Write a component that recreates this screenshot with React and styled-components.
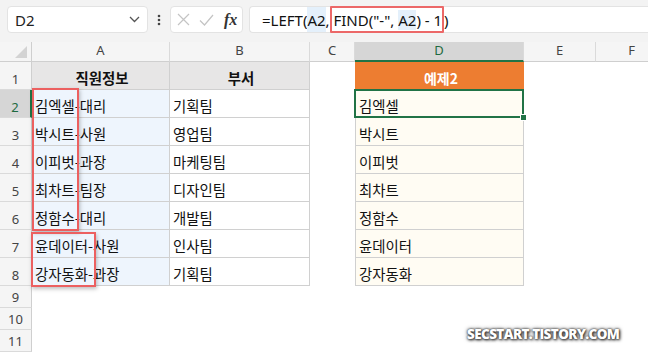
import React from 'react';
import styled, { createGlobalStyle, css } from 'styled-components';

const GlobalStyle = createGlobalStyle`
  body {
    margin: 0;
    background: #ffffff;
  }
`;

const Page = styled.div`
  position: relative;
  width: 648px;
  height: 353px;
  overflow: hidden;
  background: #ffffff;
  font-family: "Noto Sans", "Noto Sans CJK KR", sans-serif;
`;

const Toolbar = styled.div`
  display: flex;
  align-items: flex-start;
  height: 42px;
  box-sizing: border-box;
  padding: 6px 0 0 7px;
  background: #f3f3f3;
`;

const NameBox = styled.div`
  display: flex;
  align-items: center;
  justify-content: space-between;
  width: 141px;
  height: 27px;
  box-sizing: border-box;
  padding: 0 7px 0 7px;
  background: #ffffff;
  border: 1px solid #e3e3e3;
  border-radius: 4px;
  font-size: 15px;
  color: #222;
`;

const Dots = styled.div`
  display: flex;
  align-items: center;
  justify-content: center;
  width: 22px;
  height: 27px;
`;

const FxBox = styled.div`
  display: flex;
  align-items: center;
  gap: 9px;
  width: 73px;
  height: 27px;
  box-sizing: border-box;
  padding: 0 0 0 6px;
  margin-right: 6px;
  background: #ffffff;
  border: 1px solid #e3e3e3;
  border-radius: 4px;
`;

const Fx = styled.span`
  font-family: "Liberation Serif", serif;
  font-style: italic;
  font-weight: bold;
  font-size: 16px;
  color: #333;
  margin-left: 1px;
`;

const FormulaBox = styled.div`
  flex: 1;
  display: flex;
  align-items: stretch;
  height: 27px;
  box-sizing: border-box;
  padding-left: 12px;
  background: #ffffff;
  border: 1px solid #e3e3e3;
  border-right: none;
  border-radius: 4px 0 0 4px;
  font-size: 15px;
  color: #111;
  white-space: pre;
`;

const Token = styled.span`
  display: flex;
  align-items: center;
  ${(p) => p.$ref && css`background: #e4f0fb;`}
`;

const Marked = styled.span`
  display: flex;
  align-items: center;
  margin: -1px 0 -1px -4px;
  padding: 0 0 0 2px;
  border: 2px solid #ec6868;
  border-radius: 1px;
`;

const Sheet = styled.div`
  position: relative;
  display: grid;
  grid-template-columns: 32px 138px 140px 45px 169px 72px 72px;
  grid-template-rows: 20px repeat(8, 28px) repeat(3, 22px);
  width: 668px;
`;

const Corner = styled.div`
  position: relative;
  background: #f5f5f5;
  border-right: 1px solid #cfcfcf;
  border-bottom: 1px solid #cfcfcf;
  box-sizing: border-box;

  &::after {
    content: '';
    position: absolute;
    right: 4px;
    bottom: 3px;
    border-left: 12px solid transparent;
    border-bottom: 12px solid #d3d3d3;
  }
`;

const ColHead = styled.div`
  display: flex;
  align-items: center;
  justify-content: center;
  padding-bottom: 3px;
  box-sizing: border-box;
  background: ${(p) => (p.$active ? '#d6d6d6' : '#f5f5f5')};
  border-right: 1px solid #dadada;
  border-bottom: ${(p) => (p.$active ? '2px solid #217346' : '1px solid #cfcfcf')};
  font-size: 13px;
  color: ${(p) => (p.$active ? '#1e6b41' : '#444')};
`;

const RowHead = styled.div`
  display: flex;
  align-items: flex-end;
  justify-content: center;
  padding-bottom: 2px;
  box-sizing: border-box;
  background: ${(p) => (p.$active ? '#d6d6d6' : '#f5f5f5')};
  border-right: ${(p) => (p.$active ? '2px solid #217346' : '1px solid #cfcfcf')};
  border-bottom: 1px solid #dadada;
  font-size: 13px;
  line-height: 16px;
  color: ${(p) => (p.$active ? '#1e6b41' : '#444')};
`;

const kinds = {
  title: css`
    background: #e7e6e6;
    justify-content: center;
    font-weight: bold;
    border-right: 1px solid #d0d0d0;
    border-bottom: 1px solid #d0d0d0;
  `,
  name: css`
    background: #eef5fd;
    border-right: 1px solid #d0d0d0;
    border-bottom: 1px solid #d0d0d0;
  `,
  dept: css`
    background: #ffffff;
    border-right: 1px solid #d0d0d0;
    border-bottom: 1px solid #d0d0d0;
  `,
  resultTitle: css`
    background: #ed7d31;
    color: #ffffff;
    justify-content: center;
    font-weight: bold;
    font-size: 14px;
  `,
  result: css`
    background: #fffcf3;
    border-left: 1px solid #d0d0d0;
    border-right: 1px solid #d0d0d0;
    border-bottom: 1px solid #d0d0d0;
  `,
  blank: css`
    background: #ffffff;
  `,
};

const Cell = styled.div`
  position: relative;
  display: flex;
  align-items: center;
  padding: 3px 0 0 3px;
  box-sizing: border-box;
  font-family: "Noto Sans CJK KR", "Noto Sans", sans-serif;
  font-size: 14.4px;
  color: #111;
  white-space: nowrap;
  ${(p) => kinds[p.$kind]}

  ${(p) =>
    p.$selected &&
    css`
      &::after {
        content: '';
        position: absolute;
        left: -2px;
        top: -1px;
        right: -1px;
        bottom: -1px;
        border: 2px solid #217346;
        z-index: 2;
      }
      &::before {
        content: '';
        position: absolute;
        right: -4px;
        bottom: -4px;
        width: 5px;
        height: 5px;
        background: #217346;
        border: 1px solid #ffffff;
        z-index: 3;
      }
    `}
`;

const Mark = styled.div`
  position: absolute;
  left: ${(p) => p.$left}px;
  top: ${(p) => p.$top}px;
  width: ${(p) => p.$width}px;
  height: ${(p) => p.$height}px;
  box-sizing: border-box;
  border: 2px solid #ec6060;
  box-shadow: 1px 2px 4px rgba(0, 0, 0, 0.25);
  pointer-events: none;
`;

const Watermark = styled.div`
  position: absolute;
  left: 467px;
  top: 325px;
  font-family: "Open Sans", sans-serif;
  font-weight: 800;
  font-size: 13.5px;
  letter-spacing: -0.6px;
  color: #ffffff;
  text-shadow: 0 0 2px #333, 1px 1px 3px #222, 0 0 4px rgba(0, 0, 0, 0.6);
`;

const letters = ['A', 'B', 'C', 'D', 'E', 'F'];

const data = [
  ['김엑셀-대리', '기획팀', '김엑셀'],
  ['박시트-사원', '영업팀', '박시트'],
  ['이피벗-과장', '마케팅팀', '이피벗'],
  ['최차트-팀장', '디자인팀', '최차트'],
  ['정함수-대리', '개발팀', '정함수'],
  ['윤데이터-사원', '인사팀', '윤데이터'],
  ['강자동화-과장', '기획팀', '강자동화'],
];

const Chevron = () => (
  <svg width="11" height="7" viewBox="0 0 11 7">
    <path d="M1 1l4.5 4.5L10 1" fill="none" stroke="#555" strokeWidth="1.3" />
  </svg>
);

const VDots = () => (
  <svg width="4" height="12" viewBox="0 0 4 12">
    <circle cx="2" cy="2" r="1.3" fill="#444" />
    <circle cx="2" cy="6" r="1.3" fill="#444" />
    <circle cx="2" cy="10" r="1.3" fill="#444" />
  </svg>
);

const Cross = () => (
  <svg width="13" height="13" viewBox="0 0 13 13">
    <path d="M1 1l11 11M12 1L1 12" stroke="#c4c4c4" strokeWidth="1.2" fill="none" />
  </svg>
);

const Check = () => (
  <svg width="15" height="12" viewBox="0 0 15 12">
    <path d="M1 6.5l4.5 4.5L14 1" stroke="#c4c4c4" strokeWidth="1.2" fill="none" />
  </svg>
);

const rowCells = (r) => {
  if (r === 1) {
    return [
      <Cell key="a" $kind="title">직원정보</Cell>,
      <Cell key="b" $kind="title">부서</Cell>,
      <Cell key="c" $kind="blank" />,
      <Cell key="d" $kind="resultTitle">예제2</Cell>,
    ];
  }
  if (r <= 8) {
    const [name, dept, result] = data[r - 2];
    return [
      <Cell key="a" $kind="name">{name}</Cell>,
      <Cell key="b" $kind="dept">{dept}</Cell>,
      <Cell key="c" $kind="blank" />,
      <Cell key="d" $kind="result" $selected={r === 2}>{result}</Cell>,
    ];
  }
  return [
    <Cell key="a" $kind="blank" />,
    <Cell key="b" $kind="blank" />,
    <Cell key="c" $kind="blank" />,
    <Cell key="d" $kind="blank" />,
  ];
};

const App = () => {
  const rows = Array.from({ length: 11 }, (_, i) => i + 1);
  return (
    <Page>
      <GlobalStyle />
      <Toolbar>
        <NameBox>
          <span>D2</span>
          <Chevron />
        </NameBox>
        <Dots>
          <VDots />
        </Dots>
        <FxBox>
          <Cross />
          <Check />
          <Fx>fx</Fx>
        </FxBox>
        <FormulaBox>
          <Token>=LEFT(</Token>
          <Token $ref>A2</Token>
          <Token>, </Token>
          <Marked>
            <Token>FIND("-", </Token>
            <Token $ref>A2</Token>
            <Token>) - 1</Token>
          </Marked>
          <Token>)</Token>
        </FormulaBox>
      </Toolbar>
      <Sheet>
        <Corner />
        {letters.map((l) => (
          <ColHead key={l} $active={l === 'D'}>{l}</ColHead>
        ))}
        {rows.map((r) => (
          <React.Fragment key={r}>
            <RowHead $active={r === 2}>{r}</RowHead>
            {rowCells(r)}
            <Cell $kind="blank" />
            <Cell $kind="blank" />
          </React.Fragment>
        ))}
        <Mark $left={32} $top={46} $width={47} $height={143} />
        <Mark $left={31} $top={190} $width={65} $height={55} />
      </Sheet>
      <Watermark>SECSTART.TISTORY.COM</Watermark>
    </Page>
  );
};

export default App;
